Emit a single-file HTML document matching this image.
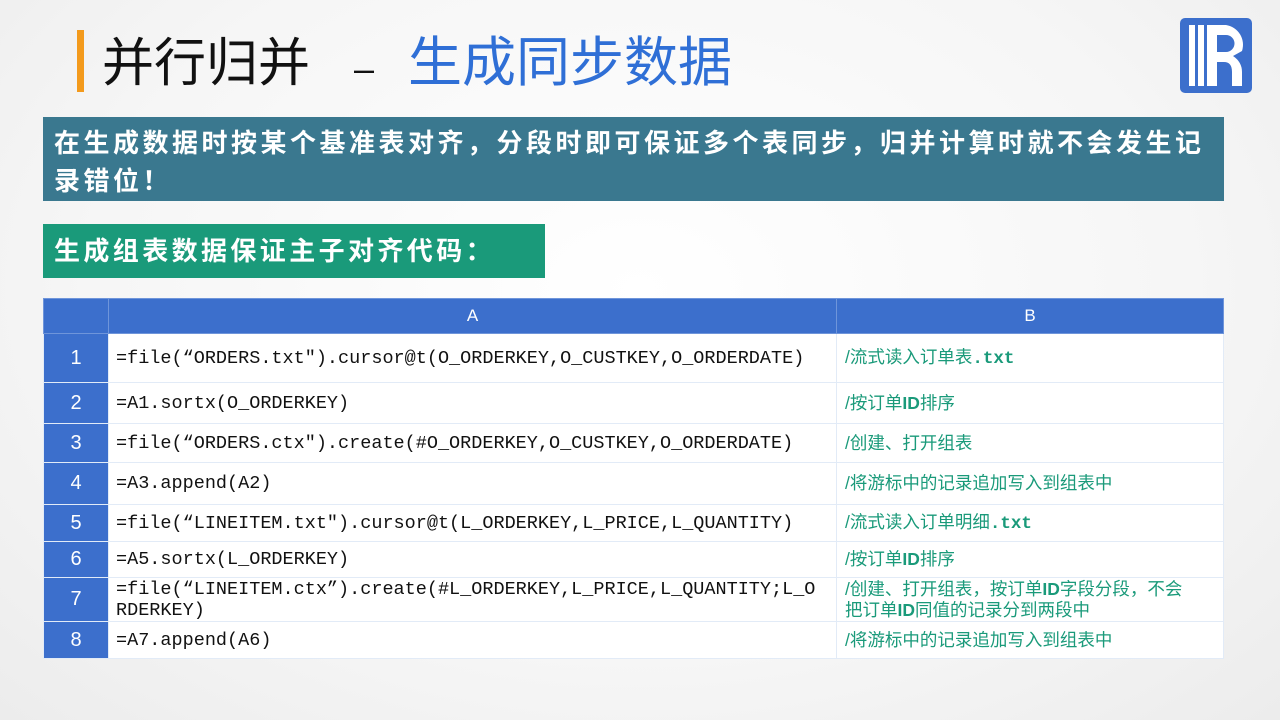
<!DOCTYPE html>
<html><head><meta charset="utf-8"><style>
body{margin:0;width:1280px;height:720px;overflow:hidden;background:radial-gradient(ellipse at 50% 40%,#ffffff 0%,#f6f6f6 60%,#ececec 100%);font-family:"Liberation Sans","Noto Sans CJK SC",sans-serif;position:relative}
.abs{position:absolute}
table{border-collapse:collapse;position:absolute;left:43px;top:298px;width:1181px}
td{border:1px solid #e2ebf7;padding:0;background:#fff}
td.n{background:#3c6fcc;color:#fff;text-align:center;font-size:20px;width:64px}
td.c{font-family:"Liberation Mono","Noto Sans CJK SC",monospace;font-size:18.5px;padding-left:7px;color:#111;width:720px;line-height:21px}
td.m{color:#1a9a7a;font-size:17.5px;padding-left:8px;line-height:21px}
tr.h td{background:#3c6fcc;color:#fff;text-align:center;font-size:17px;border-color:#6f95da}
</style></head><body>
<div class="abs" style="left:77px;top:30px;width:7px;height:62px;background:#f39a1c"></div>
<div class="abs" style="left:102px;top:28px;font-size:52px;line-height:70px;color:#111;white-space:nowrap">并行归并<span style="display:inline-block;width:44px"></span><span style="font-size:36px">–</span><span style="display:inline-block;width:34px"></span><span style="color:#2f6fd6;font-size:54px">生成同步数据</span></div>
<svg class="abs" style="left:1180px;top:18px" width="72" height="75" viewBox="0 0 72 75">
<rect x="0" y="0" width="72" height="75" rx="5" fill="#3c6fcc"/>
<rect x="9" y="7" width="6" height="61" fill="#fff"/><rect x="18" y="7" width="6" height="61" fill="#fff"/>
<path d="M27 7 H46 A20 20 0 0 1 62 33 L53 38 Q62 44 62 54 V68 H52 V54 Q52 44 44 44 H37 V68 H27 Z M37 17 V34 H46 A8.5 8.5 0 0 0 46 17 Z" fill="#fff" fill-rule="evenodd"/>
</svg>
<div class="abs" style="left:43px;top:117px;width:1181px;height:84px;background:#3a788f"></div>
<div class="abs" style="left:54px;top:124px;white-space:nowrap;color:#fff;font-size:26px;letter-spacing:3.5px;line-height:38px;font-weight:bold">在生成数据时按某个基准表对齐，分段时即可保证多个表同步，归并计算时就不会发生记<br>录错位！</div>
<div class="abs" style="left:43px;top:224px;width:502px;height:54px;background:#1a9a7a;color:#fff;font-size:26px;letter-spacing:3.4px;line-height:54px;font-weight:bold;text-indent:11px">生成组表数据保证主子对齐代码：</div>
<table>
<tr class="h" style="height:35px"><td style="width:64px"></td><td>A</td><td>B</td></tr>
<tr style="height:49px"><td class="n">1</td><td class="c">=file(“ORDERS.txt").cursor@t(O_ORDERKEY,O_CUSTKEY,O_ORDERDATE)</td><td class="m">/流式读入订单表<span style="font-family:'Liberation Mono',monospace;font-weight:bold">.txt</span></td></tr>
<tr style="height:41px"><td class="n">2</td><td class="c">=A1.sortx(O_ORDERKEY)</td><td class="m">/按订单<b>ID</b>排序</td></tr>
<tr style="height:39px"><td class="n">3</td><td class="c">=file(“ORDERS.ctx").create(#O_ORDERKEY,O_CUSTKEY,O_ORDERDATE)</td><td class="m">/创建、打开组表</td></tr>
<tr style="height:42px"><td class="n">4</td><td class="c">=A3.append(A2)</td><td class="m">/将游标中的记录追加写入到组表中</td></tr>
<tr style="height:37px"><td class="n">5</td><td class="c">=file(“LINEITEM.txt").cursor@t(L_ORDERKEY,L_PRICE,L_QUANTITY)</td><td class="m">/流式读入订单明细<span style="font-family:'Liberation Mono',monospace;font-weight:bold">.txt</span></td></tr>
<tr style="height:36px"><td class="n">6</td><td class="c">=A5.sortx(L_ORDERKEY)</td><td class="m">/按订单<b>ID</b>排序</td></tr>
<tr style="height:44px"><td class="n">7</td><td class="c">=file(“LINEITEM.ctx”).create(#L_ORDERKEY,L_PRICE,L_QUANTITY;L_O<br>RDERKEY)</td><td class="m">/创建、打开组表，按订单<b>ID</b>字段分段，不会<br>把订单<b>ID</b>同值的记录分到两段中</td></tr>
<tr style="height:37px"><td class="n">8</td><td class="c">=A7.append(A6)</td><td class="m">/将游标中的记录追加写入到组表中</td></tr>
</table>
</body></html>
